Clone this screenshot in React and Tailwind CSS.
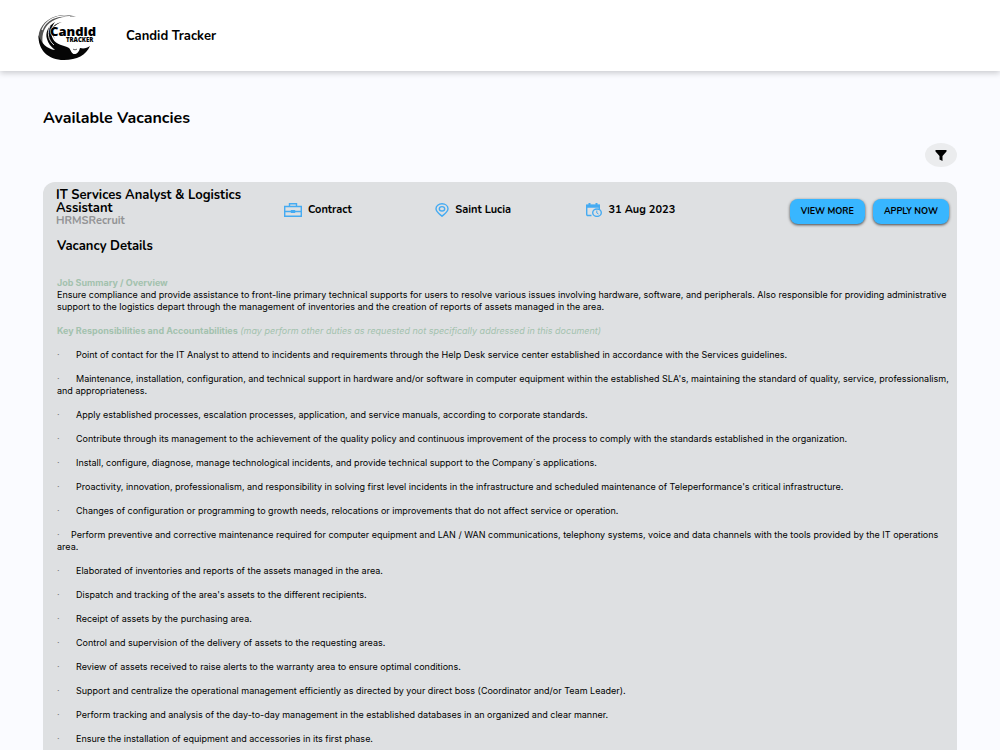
const duties = [
  { text: 'Point of contact for the IT Analyst to attend to incidents and requirements through the Help Desk service center established in accordance with the Services guidelines.' },
  { text: "Maintenance, installation, configuration, and technical support in hardware and/or software in computer equipment within the established SLA's, maintaining the standard of quality, service, professionalism, and appropriateness." },
  { text: 'Apply established processes, escalation processes, application, and service manuals, according to corporate standards.' },
  { text: 'Contribute through its management to the achievement of the quality policy and continuous improvement of the process to comply with the standards established in the organization.' },
  { text: 'Install, configure, diagnose, manage technological incidents, and provide technical support to the Company´s applications.' },
  { text: "Proactivity, innovation, professionalism, and responsibility in solving first level incidents in the infrastructure and scheduled maintenance of Teleperformance's critical infrastructure." },
  { text: 'Changes of configuration or programming to growth needs, relocations or improvements that do not affect service or operation.' },
  { text: 'Perform preventive and corrective maintenance required for computer equipment and LAN / WAN communications, telephony systems, voice and data channels with the tools provided by the IT operations area.', tight: true },
  { text: 'Elaborated of inventories and reports of the assets managed in the area.' },
  { text: "Dispatch and tracking of the area's assets to the different recipients." },
  { text: 'Receipt of assets by the purchasing area.' },
  { text: 'Control and supervision of the delivery of assets to the requesting areas.' },
  { text: 'Review of assets received to raise alerts to the warranty area to ensure optimal conditions.' },
  { text: 'Support and centralize the operational management efficiently as directed by your direct boss (Coordinator and/or Team Leader).' },
  { text: 'Perform tracking and analysis of the day-to-day management in the established databases in an organized and clear manner.' },
  { text: 'Ensure the installation of equipment and accessories in its first phase.' },
];

function Logo() {
  return (
    <svg className="w-[60px] h-12" viewBox="0 0 60 48" role="img" aria-label="Candid Tracker">
      <path d="M38 4C22-2 4 6 1 20 0 27 2 33 6 37 4 30 3 21 8 14 13 7 24 2 38 4Z" fill="#555" />
      <path d="M32 3.500C19 1 8 7 4 17" fill="none" stroke="#fff" strokeWidth="1.200" />
      <path d="M.5 22C0 37 10 47 26 47c13 0 22-5 26-14-3 2-6 3-10 2-1 4-3 6-6 6-3-1-3-4-5-6-5-3-13-3-16-9-3-6-2-12 2-17-7 4-10 11-8 17 1 4 4 8 8 11C9 36 3 30 .5 22Z" fill="#050505" />
      <path d="M12 13c-3 7-2 14 4 19" fill="none" stroke="#fff" strokeWidth=".8" />
      <path d="M31 33c4 2 2 7 5 8 3 0 5-3 5-7l3-3-13-1Z" fill="#fff" />
      <path d="M39 36c-1 1-3 1-4 0" fill="none" stroke="#050505" strokeWidth=".6" />
      <path d="M15 13h45v10H18c-2-3-3-6-3-10Z" fill="#fff" />
      <path d="M24 9c-9 3-12 9-7 17-6-7-4-15 7-17Z" fill="#050505" />
      <text x="12" y="23" fontFamily="Open Sans, sans-serif" fontSize="13" fontWeight="800" stroke="#fff" strokeWidth="1" paintOrder="stroke">Candid</text>
      <text x="28" y="29" fontFamily="Open Sans, sans-serif" fontSize="6" fontWeight="800" stroke="#fff" strokeWidth="1" paintOrder="stroke">TRACKER</text>
    </svg>
  );
}

function BriefcaseIcon() {
  return (
    <svg className="w-[18px] h-[14px]" viewBox="0 0 18 14" fill="none" stroke="#45abf2" strokeWidth="1.400" aria-hidden="true">
      <path d="M.7 3.500h16.600v9.800H.7zM5.500 3.500V.7h7v2.800M.7 8.500h6.800M10.500 8.500h6.800M7.500 7.700h3v1.600h-3z" />
    </svg>
  );
}

function PinIcon() {
  return (
    <svg className="w-[14px] h-[14px]" viewBox="0 0 14 14" fill="none" stroke="#45abf2" strokeWidth="1.400" aria-hidden="true">
      <path d="M7 13.200C4.500 11 1 9 1 5.800 1 2.800 3.700.8 7 .8s6 2 6 5C13 9 9.500 11 7 13.200Z" />
      <ellipse cx="7" cy="5.800" rx="2.700" ry="2.200" />
    </svg>
  );
}

function DateIcon() {
  return (
    <svg className="w-4 h-[14px]" viewBox="0 0 16 14" fill="none" stroke="#45abf2" aria-hidden="true">
      <path d="M5.500 12.500H2q-1.300 0-1.300-1.300V2.500h12.600V6" strokeWidth="1.400" />
      <path d="M.2 1.500h13.800v3.300H.2zM2.500 0h2v2h-2zM9.500 0h2v2h-2z" fill="#45abf2" stroke="none" />
      <ellipse cx="11" cy="9.700" rx="4.300" ry="3.700" strokeWidth="1.400" />
      <path d="M10.800 7.500v2.500l1.700 1" />
    </svg>
  );
}

function Fact({ icon, children }) {
  return (
    <div className="flex-1 flex items-center gap-1.5 text-[11px] leading-4 font-bold">
      {icon}
      <span>{children}</span>
    </div>
  );
}

function CardButton({ children }) {
  return (
    <button
      type="button"
      className="h-[25px] px-[11px] rounded-lg bg-[#38b6ff] text-[9px] font-bold whitespace-nowrap shadow-[0_1px_3px_rgba(0,0,0,0.7)]"
    >
      {children}
    </button>
  );
}

export default function App() {
  return (
    <div className="h-screen overflow-hidden bg-[#fafbff] text-black font-['Nunito','Open_Sans',sans-serif]">
      <header className="flex items-center gap-7 h-[71px] pt-0.5 px-[38px] bg-white shadow-[0_2px_6px_rgba(0,0,0,0.2)]">
        <Logo />
        <span className="text-[13px] font-bold">Candid Tracker</span>
      </header>

      <main className="px-[43px] pt-[35px]">
        <h1 className="text-[16px] leading-6 font-bold">Available Vacancies</h1>
        <div className="flex justify-end pt-[13px]">
          <button
            type="button"
            aria-label="Filter vacancies"
            className="flex items-center justify-center w-8 h-6 rounded-[50%] bg-[#ebecee]"
          >
            <svg className="w-3 h-[11px]" viewBox="0 0 12 11" aria-hidden="true">
              <path d="M.5 0h11v1.500L7.500 6v5l-3-1.500V6L.5 1.500Z" />
            </svg>
          </button>
        </div>

        <article className="mt-[15px] rounded-[12px] bg-[#dee0e2] pb-6">
          <div className="flex items-start pt-[7px] px-2">
            <div className="w-[233px] shrink-0 pl-[5px] pr-6">
              <h2 className="text-[13px] leading-[13px] font-bold">IT Services Analyst &amp; Logistics Assistant</h2>
              <p className="text-[11px] leading-3 font-bold text-[#929395]">HRMSRecruit</p>
            </div>
            <div className="flex flex-1 pt-[13px]">
              <Fact icon={<BriefcaseIcon />}>Contract</Fact>
              <Fact icon={<PinIcon />}>Saint Lucia</Fact>
              <Fact icon={<DateIcon />}>31 Aug 2023</Fact>
            </div>
            <div className="flex gap-2 pt-[10px] pl-[52px]">
              <CardButton>VIEW MORE</CardButton>
              <CardButton>APPLY NOW</CardButton>
            </div>
          </div>

          <div className="pl-[14px] pr-1 pt-[9px]">
            <h3 className="text-[13px] leading-5 font-bold">Vacancy Details</h3>
            <div className="pt-[21px] text-[9px] leading-3 font-['Inter','Liberation_Sans',sans-serif]">
              <h4 className="font-bold text-[#a3c2ae]">Job Summary / Overview</h4>
              <p>
                Ensure compliance and provide assistance to front-line primary technical supports for users to resolve various issues involving hardware, software, and peripherals. Also responsible for providing administrative support to the logistics depart through the management of inventories and the creation of reports of assets managed in the area.
              </p>
              <h4 className="mt-3 text-[#a3c2ae]">
                <strong>Key Responsibilities and Accountabilities</strong>{' '}
                <em>(may perform other duties as requested not specifically addressed in this document)</em>
              </h4>
              <ul>
                {duties.map(({ text, tight }) => (
                  <li key={text} className="mt-3">
                    <span className={`inline-block text-[#777] ${tight ? 'w-[14px]' : 'w-[19px]'}`}>·</span>
                    {text}
                  </li>
                ))}
              </ul>
            </div>
          </div>
        </article>
      </main>
    </div>
  );
}
